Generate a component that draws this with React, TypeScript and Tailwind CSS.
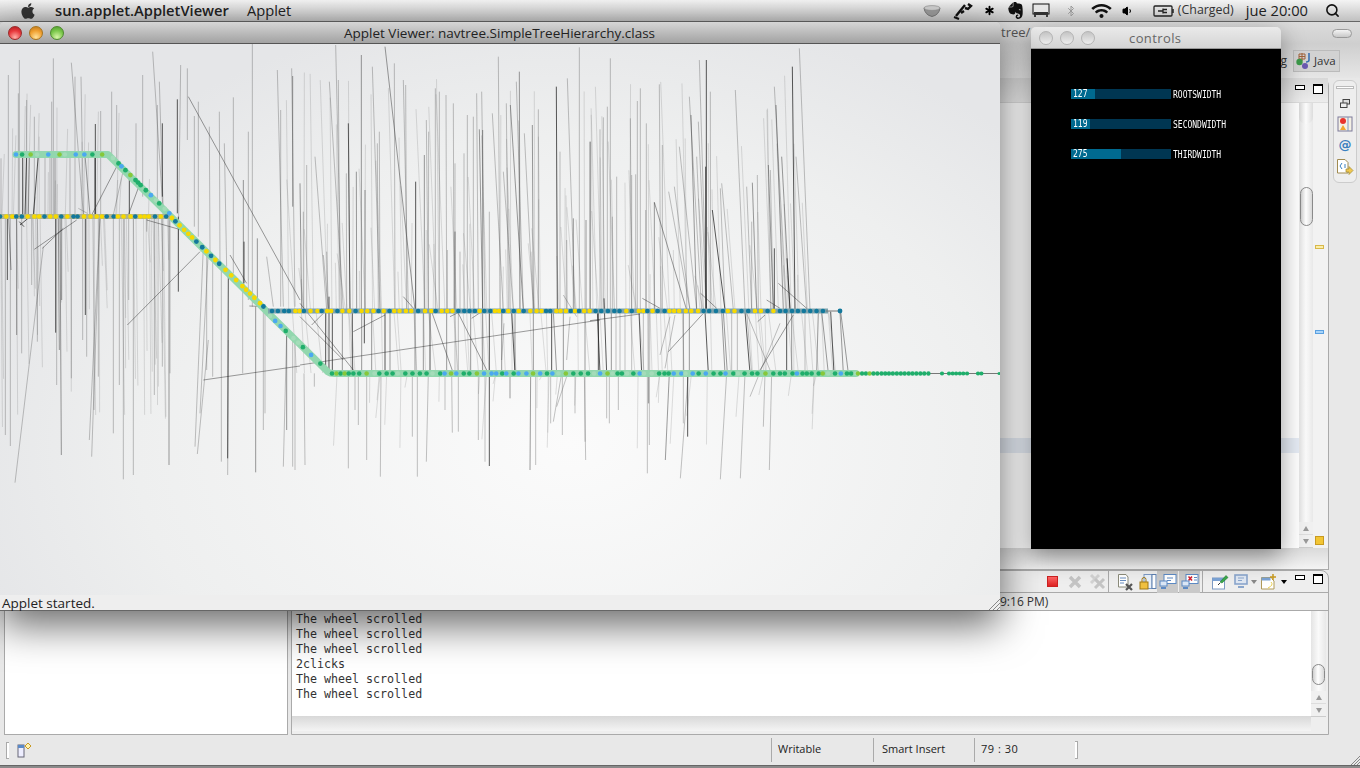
import { FaApple, FaWifi } from "react-icons/fa";
import { SiEvernote } from "react-icons/si";
import { Bluetooth, Search, Asterisk, Volume1 } from "lucide-react";

type Seg = [number, number, number, number, number];

const Z9: Seg[] = [
  [107,15,125,810,1],[88,125,130,810,1],[115,120,120,810,1],[184,45,184,810,2],[217,80,240,810,1],[145,250,150,810,3],[255,20,345,810,2],[283,70,285,810,1],[310,120,325,810,1],[317,135,320,810,1],[232,310,235,810,1],[238,275,240,810,1],[139,400,140,810,1],[169,395,170,810,2],[195,450,195,810,2],[347,425,347,810,3],[373,345,373,810,2],[379,240,385,810,1],[386,275,385,810,1],[406,145,406,810,1],[418,155,418,810,1],[438,165,440,810,1],[460,190,462,810,1],[502,225,502,810,1],[520,230,520,810,1],[492,340,492,810,1],[530,160,535,810,1],[545,155,555,810,1],[538,268,548,810,2],[548,270,548,810,2],[465,370,465,810,1],[465,575,465,810,2],[480,635,480,810,1],[442,630,442,810,1],[577,220,610,810,1],[595,50,600,810,1],[619,190,625,810,1],[631,195,670,810,2],[649,125,670,810,1],[658,95,660,810,2],[673,280,700,810,1],[697,255,700,810,2],[715,208,715,810,1],[769,140,772,810,3],[780,335,780,810,1],[802,115,825,810,1],[838,22,838,810,1],[871,305,871,810,1],[858,540,858,810,2],[820,535,820,810,2],[800,600,800,810,1],[610,395,640,810,1],[568,515,568,810,1],[20,375,20,810,1],[45,350,80,810,1],[0,430,5,810,2],[10,515,10,810,1],[70,645,85,810,1],[80,635,85,810,1],
  [77,815,77,1000,3],[87,770,87,1000,3],[97,815,97,1000,3],[127,815,127,1000,2],[157,815,157,1000,3],[185,815,185,1000,2],[193,815,193,910,3],[215,815,215,1000,2],[255,815,255,1000,3],[270,815,270,1000,2],[345,815,345,1000,2],[370,815,370,1000,2],[390,815,390,1000,3],[440,815,440,1000,2],[465,815,465,1000,1],[475,815,475,1000,1],[512,815,512,1000,2],[548,815,548,1000,2],[568,815,568,1000,3],[605,815,605,1000,2],[635,815,645,1000,3],[612,850,605,960,1],[645,815,645,1000,2],[700,815,700,1000,2],[755,815,755,1000,3],[760,815,770,1000,2],[790,815,790,1000,2],[810,830,800,960,1],[855,815,855,1000,2],[895,815,895,1000,3],
  [395,815,460,1000,2],[475,820,565,1000,2],[0,790,160,990,2],[0,830,130,960,2],[310,770,345,810,2],[160,875,255,825,2],[35,855,70,820,2],[0,975,900,840,2],[450,830,480,815,2],[515,835,545,815,2],[790,765,830,830,1],
  [12,1000,15,1275,1],[43,1000,43,1040,1],[145,1000,145,1285,1],[175,1000,175,1155,1],[165,1000,165,1110,1],[200,1000,200,1260,1],[243,1000,241,1310,1],[337,1000,337,1190,1],[352,1000,352,1310,1],[385,1000,379,1265,1],[435,1000,435,1110,1],[455,1000,457,1178,1],[475,1000,475,1175,1],[535,1000,535,1200,1],[555,1000,555,1265,1],[568,1000,568,1278,3],[630,1000,630,1075,2],[692,1000,690,1290,2],[707,1000,707,1275,1],[752,1000,752,1150,1],[785,1000,760,1145,1],[787,1000,787,1185,1],[825,1000,825,1120,1],[855,1000,855,1205,1],[853,1000,857,1260,1],[800,1010,770,1100,1],
];

const Z10: Seg[] = [
  [61,55,61,810,1],[52,200,52,810,1],[40,232,40,810,1],[30,268,30,810,1],[0,305,0,810,2],[121,235,125,810,1],[125,405,125,810,1],[137,403,137,810,1],[142,183,142,810,1],[151,145,151,810,1],[169,250,169,810,1],[167,510,167,810,1],[80,410,80,810,1],[67,530,67,810,1],[208,133,212,810,1],[217,315,217,810,1],[193,487,290,810,2],[193,487,193,810,2],[236,455,300,810,1],[253,440,300,810,1],[268,320,320,810,1],[298,170,335,810,1],[303,225,320,810,2],[325,245,350,810,1],[320,350,340,810,1],[328,60,350,810,1],[349,60,349,810,3],[361,155,362,810,1],[347,380,347,810,3],[367,510,405,810,3],[395,430,430,810,1],[391,445,405,810,1],[436,150,465,810,1],[470,440,485,810,1],[487,428,500,810,2],[502,405,505,810,1],[485,545,485,810,1],[535,375,550,810,2],[541,390,550,810,1],[553,140,590,810,1],[558,195,580,810,2],[575,350,600,810,2],[553,625,553,810,3],[591,655,600,810,3],[607,80,615,810,3],[628,25,660,810,1],[618,350,650,810,1],[565,730,650,805,2],[530,780,570,805,2],[157,775,210,805,2],[332,760,380,805,2],
  [22,815,30,1000,3],[42,775,50,1000,3],[64,815,64,1000,2],[78,815,78,1000,1],[90,815,90,1000,1],[105,815,105,1000,1],[125,815,125,1000,1],[147,815,155,1000,3],[175,815,175,1000,1],[179,815,179,1000,1],[160,815,160,1000,1],[280,815,280,1000,2],[298,815,298,1000,2],[345,815,355,1000,3],[395,815,405,1000,2],[400,815,412,1000,2],[425,815,425,1000,1],[442,815,442,1000,1],[465,815,480,1000,3],[470,815,485,1000,1],[590,815,590,1000,3],[605,815,605,1000,2],[645,815,645,1000,1],[685,815,680,1000,2],[695,815,715,1000,2],[722,815,732,1000,3],[752,815,775,1000,2],[750,815,760,1000,2],
  [235,935,340,820,2],[210,945,240,830,1],[510,990,610,825,2],[480,1070,570,850,1],[225,985,255,825,1],[503,845,525,825,2],[470,820,540,990,1],[0,842,150,822,2],
  [50,1000,50,1135,1],[58,1000,58,1150,1],[85,1000,85,1110,1],[172,1000,172,1300,1],[178,1000,178,1215,1],[175,1000,175,1090,1],[176,1000,176,1090,1],[238,1000,226,1260,2],[295,1000,271,1315,1],[280,1000,280,1150,1],[293,1000,293,1190,3],[410,1000,391,1318,1],[465,1000,451,1315,1],[525,1000,520,1160,1],[545,1000,538,1290,1],
];

const Z11: Seg[] = [
  [25,105,25,525,1],[58,60,58,525,1],[55,160,55,525,1],[80,180,80,525,1],[103,230,103,525,1],[160,55,160,525,1],[155,185,155,525,1],[214,68,250,525,1],[225,110,225,525,1],[243,110,250,525,1],[302,213,302,525,1],[286,252,286,525,3],[335,155,335,345,1],[350,195,350,370,1],[408,250,408,420,1],[428,105,428,470,1],[458,35,490,525,1],[478,125,490,525,1],[487,250,487,470,3],[472,195,472,490,1],[532,178,532,520,3],[542,75,535,600,1],[562,85,562,300,1],[583,228,583,560,1],[595,185,595,590,1],[3,355,3,525,1],
  [68,345,68,525,3],[80,345,75,525,3],[88,345,85,525,2],[115,345,100,525,3],[135,345,135,525,1],[150,345,150,525,1],[285,345,285,525,3],[255,345,270,525,2],[388,400,388,525,3],[165,345,165,525,2],[210,345,210,525,1],[350,380,275,525,2],[420,430,385,525,2],[370,390,340,525,1],
  [22,530,22,720,3],[26,530,33,690,2],[16,530,16,1185,1],[31,530,31,1218,1],[50,530,50,885,2],[65,530,65,940,1],[95,530,95,735,1],[112,530,112,905,1],[167,530,167,878,3],[170,530,170,1035,1],[180,530,184,1245,2],[175,530,178,930,2],[185,530,185,780,2],[214,530,214,1015,1],[256,530,256,825,3],[248,530,248,900,1],[260,530,260,950,1],[300,530,268,1200,1],[300,530,275,1250,1],[282,530,282,1110,1],[295,530,295,1010,1],[340,530,340,1180,1],[358,530,358,1035,1],[370,530,370,1318,1],[386,530,386,780,1],[400,530,400,1305,1],[463,530,463,1065,1],[487,530,487,980,1],[507,530,507,1275,2],[510,530,510,1000,1],[535,530,535,755,3],
  [130,620,45,1328,1],[103,628,230,540,2],[127,625,190,565,2],[382,855,600,635,2],[565,170,900,780,2],[690,645,740,730,2],[610,1020,900,978,2],[60,555,90,530,3],[58,545,72,560,3],[440,540,545,570,2],[235,505,262,520,1],[440,535,440,575,1],
  [628,260,630,640,1],[658,215,660,680,1],[700,172,700,700,1],[673,310,680,680,1],[730,420,730,740,2],[732,605,732,730,3],[745,275,745,780,1],[757,10,757,800,1],[772,595,772,790,2],[767,800,767,1297,2],[685,700,683,1255,3],[685,900,683,1305,1],[625,630,600,1120,1],[625,900,592,1242,1],[610,620,585,1220,1],[620,640,620,990,1],[638,650,638,1010,1],[664,670,664,1265,1],[728,740,728,1000,1],[790,800,790,1170,1],[795,800,795,1120,1],[860,880,850,1280,1],[860,880,860,1170,2],[878,900,878,1280,1],[885,900,885,1290,1],[832,90,850,800,1],[842,210,842,800,1],[875,85,885,800,1],[878,108,878,500,2],[800,650,820,800,1],[748,798,800,800,2],
];

const segs: Seg[] = [
  ...Z9.map((s) => [300 + s[0] / 3, 40 + s[1] / 3, 300 + s[2] / 3, 40 + s[3] / 3, s[4]] as Seg),
  ...Z10.map((s) => [590 + s[0] / 3, 40 + s[1] / 3, 590 + s[2] / 3, 40 + s[3] / 3, s[4]] as Seg),
  ...Z11.map((s) => [s[0] / 3, 40 + s[1] / 3, s[2] / 3, 40 + s[3] / 3, s[4]] as Seg),
];

let seed = 12345;
const rnd = () => {
  seed = (seed * 16807) % 2147483647;
  return seed / 2147483647;
};

// faint filler strands that give the plot its haze
for (let i = 0; i < 110; i++) {
  const x = 285 + rnd() * 540;
  segs.push([x, 70 + rnd() * 220, x + rnd() * 10 - 1, 311, 0]);
}
for (let i = 0; i < 60; i++) {
  const x = 285 + rnd() * 550;
  segs.push([x, 311, x + rnd() * 8, 373, 0]);
}
for (let i = 0; i < 30; i++) {
  const x = 335 + rnd() * 500;
  segs.push([x, 373, x - rnd() * 5, 380 + rnd() * 70, 0]);
}
for (let i = 0; i < 40; i++) {
  const x = rnd() * 170;
  segs.push([x, 216, x + rnd() * 4, 240 + rnd() * 190, 0]);
}
for (let i = 0; i < 22; i++) {
  const x = rnd() * 170;
  segs.push([x, 216, x + rnd() * 3, 90 + rnd() * 110, 0]);
}

const pick = (a: [string, number][]) => {
  let r = rnd();
  for (const [c, w] of a) {
    if (r < w) return c;
    r -= w;
  }
  return a[0][0];
};
type Node = { x: number; y: number; c: string; r: number };
const GREEN: [string, number][] = [["#1fae6b", 0.55], ["#4aa8f0", 0.18], ["#86c83a", 0.12], ["#a4dcb9", 0.15]];
const YB: [string, number][] = [["#f6d800", 0.55], ["#12789c", 0.45]];

function run(x0: number, y0: number, x1: number, y1: number, min: number, max: number, pal: [string, number][], r = 2.3): Node[] {
  const out: Node[] = [];
  const len = Math.hypot(x1 - x0, y1 - y0);
  let d = 0;
  while (d < len) {
    out.push({ x: x0 + ((x1 - x0) * d) / len, y: y0 + ((y1 - y0) * d) / len, c: pick(pal), r });
    d += min + rnd() * (max - min);
  }
  return out;
}

const nodes: Node[] = [
  ...run(16, 154.5, 108, 154.5, 5, 12, [["#4aa8f0", 0.2], ["#a4dcb9", 0.45], ["#86c83a", 0.15], ["#1fae6b", 0.2]]),
  ...run(113, 158, 170, 214, 3.5, 8, [["#4aa8f0", 0.35], ["#1fae6b", 0.3], ["#86c83a", 0.15], ["#a4dcb9", 0.2]], 2.4),
  ...run(0, 216.5, 168, 216.5, 4, 7, YB),
  ...run(172, 218, 266, 309, 4, 9, YB, 2.4),
  ...run(272, 311, 774, 311, 4, 7, YB),
  ...run(780, 311, 826, 311, 5, 6.5, [["#12789c", 1]]),
  { x: 840, y: 311, c: "#12789c", r: 2.4 },
  ...run(270, 316, 326, 369, 6, 14, [["#a4dcb9", 0.4], ["#4aa8f0", 0.2], ["#1fae6b", 0.3], ["#86c83a", 0.1]]),
  ...run(332, 373, 858, 373, 4, 8, GREEN),
  ...run(858, 373, 930, 373, 3.6, 4.2, [["#1fae6b", 0.85], ["#86c83a", 0.15]], 2.2),
  ...run(942, 373, 944, 373, 4, 4, [["#1fae6b", 1]], 2.1),
  ...run(949, 373, 969, 373, 3.4, 3.8, [["#1fae6b", 1]], 2.1),
  ...run(978, 373, 984, 373, 3.4, 3.6, [["#1fae6b", 1]], 2.1),
  { x: 999, y: 373, c: "#1fae6b", r: 1.5 },
];

const shade = ["rgba(70,70,70,0.16)", "rgba(60,60,60,0.3)", "rgba(40,40,40,0.45)", "rgba(20,20,20,0.7)"];

function Chart() {
  return (
    <svg viewBox="0 44 1000 551" className="block h-[551px] w-[1000px] blur-[0.35px]">
      {segs.map((s, i) => (
        <line key={i} x1={s[0]} y1={s[1]} x2={s[2]} y2={s[3]} stroke={shade[s[4]]} strokeWidth={1} />
      ))}
      <path d="M16 154.5H108L328 372Q330 373.5 334 373.5H856" stroke="#92d7ae" strokeWidth={7} fill="none" strokeLinecap="round" strokeLinejoin="round" />
      <path d="M0 216.5H170" stroke="#b0b48c" strokeWidth={5} fill="none" />
      <path d="M268 311H828" stroke="#7da3ad" strokeWidth={5} fill="none" />
      <path d="M826 311H840M856 373.5H1000" stroke="#777" strokeWidth={1} fill="none" />
      {nodes.map((n, i) => (
        <circle key={i} cx={n.x} cy={n.y === 373 ? 373.5 : n.y} r={n.r} fill={n.c} />
      ))}
    </svg>
  );
}

const UI = "font-['Open_Sans','Noto_Sans',sans-serif]";

function Lights() {
  return (
    <div className="flex items-center gap-[7px]">
      <div className="h-[14px] w-[14px] rounded-full border border-[#9a2a2a] bg-[radial-gradient(circle_at_50%_85%,#ffb0a8,#e8383c_55%,#a81c20)]" />
      <div className="h-[14px] w-[14px] rounded-full border border-[#a8741e] bg-[radial-gradient(circle_at_50%_85%,#ffe29a,#f0a030_55%,#b8741a)]" />
      <div className="h-[14px] w-[14px] rounded-full border border-[#4e8a2e] bg-[radial-gradient(circle_at_50%_85%,#d8f5a8,#7cc84c_55%,#4c9a2c)]" />
    </div>
  );
}

function Bar({ value, fill, label }: { value: number; fill: number; label: string }) {
  return (
    <div className="flex h-[10px] items-center">
      <div className="relative h-[10px] w-[100px] bg-[#003652]">
        <div className="h-full bg-[#006a90]" style={{ width: fill }} />
        <span className="absolute left-[2px] top-0 scale-y-125 font-['DejaVu_Sans_Mono',monospace] text-[8px] leading-[10px] text-white">{value}</span>
      </div>
      <span className="ml-[2px] mt-[1px] scale-y-125 font-['DejaVu_Sans_Mono',monospace] text-[8px] leading-[10px] text-white">{label}</span>
    </div>
  );
}

function MinMax() {
  return (
    <div className="flex items-start gap-[8px]">
      <div className="mt-[1px] h-[5px] w-[10px] border border-black bg-white" />
      <div className="h-[10px] w-[10px] border border-black border-t-[2px] bg-white" />
    </div>
  );
}

function Arrows() {
  return (
    <div className="flex flex-col items-center bg-[#f0f0f0]">
      <div className="flex h-[13px] w-full items-center justify-center border-b border-[#ddd]">
        <div className="h-0 w-0 border-x-[3px] border-b-[5px] border-x-transparent border-b-[#999]" />
      </div>
      <div className="flex h-[13px] w-full items-center justify-center border-b border-[#ccc]">
        <div className="h-0 w-0 border-x-[3px] border-t-[5px] border-x-transparent border-t-[#999]" />
      </div>
    </div>
  );
}

function Thumb({ className }: { className: string }) {
  return <div className={"mx-auto w-[13px] rounded-[7px] border border-[#8a8a8a] bg-[linear-gradient(90deg,#cfcfcf,#ffffff_45%,#d8d8d8)] " + className} />;
}

function Doc({ children }: { children?: React.ReactNode }) {
  return <svg width="18" height="18" viewBox="0 0 18 18">{children}</svg>;
}

function ConsoleIcons() {
  return (
    <div className="flex h-full items-center">
      <div className="h-[11px] w-[11px] border border-[#c22] bg-[linear-gradient(#f66,#d22)]" />
      <svg width="14" height="14" viewBox="0 0 14 14" className="ml-[10px]"><path d="M2 2L12 12M12 2L2 12" stroke="#c4c4c4" strokeWidth={3.4} /></svg>
      <svg width="17" height="17" viewBox="0 0 17 17" className="ml-[7px]"><path d="M2 2L10 10M10 2L2 10" stroke="#d2d2d2" strokeWidth={3} /><path d="M6 6L15 15M15 6L6 15" stroke="#c4c4c4" strokeWidth={3} /></svg>
      <div className="ml-[2px] h-[22px] w-px bg-[#aaa]" />
      <div className="ml-[7px]"><Doc><path d="M2.5 1.5H10L12 4V14H2.5Z" fill="#fff" stroke="#8b8b7a" /><path d="M4 5H10M4 7.5H10M4 10H8" stroke="#6a8fc0" /><path d="M10 11L16 17M16 11L10 17" stroke="#555" strokeWidth={2.2} /></Doc></div>
      <div className="ml-[5px]"><Doc><rect x="5" y="1.5" width="8" height="14" fill="#e8f0fa" stroke="#7d9ac4" /><rect x="13" y="1.5" width="4" height="14" fill="#fff" stroke="#5d80b0" /><rect x="1" y="9" width="8" height="7" fill="#f0c040" stroke="#a07814" /><path d="M3 9V6.5a2 2 0 0 1 4 0V9" fill="none" stroke="#a07814" /></Doc></div>
      <div className="flex h-[22px] w-[21px] items-center justify-center bg-[#c9c9c9]"><Doc><rect x="5" y="1.5" width="12" height="9" fill="#fff" stroke="#5d8ac4" /><path d="M8 5H14M8 7.5H12" stroke="#5d8ac4" /><rect x="1" y="8" width="7" height="5" fill="#dbe7f6" stroke="#5d8ac4" /><path d="M2 15H7" stroke="#5d8ac4" strokeWidth={2} /></Doc></div>
      <div className="ml-px flex h-[22px] w-[21px] items-center justify-center bg-[#c9c9c9]"><Doc><rect x="5" y="1.5" width="12" height="9" fill="#fff" stroke="#5d8ac4" /><path d="M7.5 3.5L11 7.5M11 3.5L7.5 7.5" stroke="#d02030" strokeWidth={1.5} /><path d="M13 4.5H16M13 7H16" stroke="#5d8ac4" /><rect x="1" y="8" width="7" height="5" fill="#dbe7f6" stroke="#5d8ac4" /><path d="M2 15H7" stroke="#5d8ac4" strokeWidth={2} /></Doc></div>
      <div className="ml-[2px] h-[22px] w-px bg-[#aaa]" />
      <div className="ml-[8px]"><Doc><rect x="1.5" y="5" width="12" height="11" fill="#fff" stroke="#7d9ac4" /><rect x="1.5" y="5" width="12" height="3" fill="#7aa2d4" /><path d="M9 9L15 2.5L17 4.5L11 10Z" fill="#3aa84a" stroke="#1e7a30" strokeWidth={0.6} /><path d="M9 10L7 12" stroke="#333" /></Doc></div>
      <div className="ml-[4px]"><Doc><rect x="2" y="2" width="12" height="9" fill="#dfe7f2" stroke="#8aa6cc" strokeWidth={1.6} /><path d="M5 5H11M5 7.5H9" stroke="#8aa6cc" /><path d="M5 14H11" stroke="#8aa6cc" strokeWidth={2} /></Doc></div>
      <div className="h-0 w-0 border-x-[3px] border-t-[4px] border-x-transparent border-t-[#888]" />
      <div className="ml-[3px]"><Doc><path d="M1.5 4.5H12V6L14 8V16H1.5Z" fill="#fff" stroke="#b09a5a" /><rect x="1.5" y="4.5" width="9" height="3" fill="#7aa2d4" /><path d="M13 1V7M10 4H16" stroke="#c89a20" strokeWidth={1.5} /><path d="M11 9Q14 12 8 15" stroke="#e8d050" fill="none" /></Doc></div>
      <div className="ml-[3px] h-0 w-0 border-x-[3px] border-t-[4px] border-x-transparent border-t-black" />
    </div>
  );
}

function TrimIcons() {
  return (
    <div className="flex flex-col items-center pt-[5px]">
      <div className="h-[3px] w-[18px] border border-[#bbb] bg-white" />
      <svg width="12" height="12" viewBox="0 0 12 12" className="mt-[9px]"><rect x="4" y="1.5" width="6.5" height="4.5" fill="#ddd" stroke="#444" /><rect x="1.5" y="5" width="6.5" height="4.5" fill="#eee" stroke="#444" /></svg>
      <svg width="16" height="16" viewBox="0 0 16 16" className="mt-[6px]"><rect x="1" y="1" width="14" height="14" fill="#f4f0e4" stroke="#7d7a9a" /><circle cx="6" cy="5" r="3" fill="#e8342c" /><path d="M3 14L6 9L9 14Z" fill="#f0a830" /><path d="M11 1V15" stroke="#7d9ac4" /></svg>
      <span className="mt-[5px] text-[13px] font-['DejaVu_Sans',sans-serif] font-bold leading-[16px] text-[#3a80c0]">@</span>
      <svg width="18" height="18" viewBox="0 0 18 18" className="mt-[5px]"><path d="M1.5 1.5H9L12 4.5V15H1.5Z" fill="#fff" stroke="#a08a50" /><path d="M6 5L4 8L6 11M8 7H10M8 9H10" stroke="#3a80c0" fill="none" /><path d="M10 11H13V8.5L17 12.5L13 16.5V14H10Z" fill="#f0c850" stroke="#a08a30" strokeWidth={0.7} /></svg>
    </div>
  );
}

export default function App() {
  return (
    <div className={"relative flex h-[768px] w-[1360px] flex-col overflow-hidden bg-[#e8e8e8] " + UI}>
      {/* Menu bar */}
      <div className="flex h-[22px] shrink-0 items-center border-b border-[#666] bg-[linear-gradient(#f4f4f4,#c0c0c0)] text-[14.7px] text-[#222]">
        <FaApple className="ml-[19px] h-[18px] w-[18px] text-[#333]" />
        <span className="ml-[18px] font-semibold">sun.applet.AppletViewer</span>
        <span className="ml-[18px]">Applet</span>
        <div className="ml-auto flex items-center">
          <svg width="18" height="12" viewBox="0 0 18 12"><path d="M1 3H17Q16 10 9 11.5Q2 10 1 3Z" fill="#9a9a9a" stroke="#777" /><ellipse cx="9" cy="3" rx="8" ry="2.4" fill="#cfcfcf" stroke="#888" strokeWidth={0.6} /></svg>
          <svg width="20" height="18" viewBox="0 0 20 18" className="ml-[12px]"><path d="M12 3L7 9L3 14M15 2L18 4L15 7L12 6M8 11L11 9" fill="none" stroke="#111" strokeWidth={2.4} /><path d="M1 15L6 17" stroke="#111" strokeWidth={2} /></svg>
          <Asterisk className="ml-[9px] h-[15px] w-[15px] text-black" strokeWidth={3} />
          <SiEvernote className="ml-[10px] h-[17px] w-[17px] text-[#111]" />
          <svg width="18" height="15" viewBox="0 0 18 15" className="ml-[8px]"><rect x="1" y="1" width="16" height="10" fill="#e6e6e6" stroke="#111" /><path d="M3 11H15V14M3 11V14" fill="none" stroke="#111" strokeWidth={1.5} /><rect x="2" y="9" width="14" height="3" fill="#333" /></svg>
          <Bluetooth className="ml-[15px] h-[12px] w-[12px] text-[#999]" />
          <FaWifi className="ml-[14px] h-[16px] w-[21px] text-[#111]" />
          <Volume1 className="ml-[10px] h-[12px] w-[12px] fill-black text-black" />
          <svg width="22" height="12" viewBox="0 0 22 12" className="ml-[19px]"><rect x="1" y="1" width="18" height="10" rx="1" fill="none" stroke="#222" strokeWidth={1.3} /><path d="M20 4V8" stroke="#222" strokeWidth={1.5} /><path d="M5 6H10M10 3.5V8.5M10 4.5H14M10 7.5H14" stroke="#222" strokeWidth={1.3} /></svg>
          <span className="ml-[3px] text-[12.4px] text-[#333]">(Charged)</span>
          <span className="ml-[12px]">jue 20:00</span>
          <Search className="ml-[17px] mr-[20px] h-[15px] w-[15px] text-[#111]" strokeWidth={2.5} />
        </div>
      </div>

      {/* Eclipse window */}
      <div className="flex h-[22px] shrink-0 items-center bg-[linear-gradient(#dcdcdc,#cfcfcf)] pl-[1001px] text-[13px] text-[#555]">
        <span>tree/</span>
        <div className="ml-auto mr-[8px] h-[9px] w-[20px] rounded-full border border-[#999] bg-[linear-gradient(#f4f4f4,#c8c8c8)]" />
      </div>
      <div className="flex h-[34px] shrink-0 items-start justify-end bg-[linear-gradient(#cfcfcf,#e6e6e6)] pr-[20px] pt-[6px] text-[11.5px] text-[#333]">
        <span className="mr-[6px] mt-[2px] text-[12px]">Debug</span>
        <div className="flex h-[22px] w-[47px] items-center gap-px border border-[#bbb] bg-[#d2d2d2] pl-px">
          <svg width="18" height="18" viewBox="0 0 18 18"><path d="M4 2H10V7H4ZM7 1V9M4 4.5H10" stroke="#a0623a" fill="none" /><circle cx="4.5" cy="10" r="3.2" fill="#3c9a4a" /><circle cx="10" cy="14" r="3" fill="#6a5ab0" /><path d="M14 1V8Q14 10 11 10" stroke="#3a70b0" strokeWidth={1.6} fill="none" /></svg>
          <span>Java</span>
        </div>
      </div>

      {/* Editor row */}
      <div className="flex h-[492px] shrink-0">
        <div className="flex w-[1329px] flex-col rounded-tr-[8px] border-r border-b border-[#aaa] bg-[#eee]">
          <div className="flex h-[25px] shrink-0 justify-end border-b border-[#ddd] bg-[linear-gradient(#d8d8d8,#ececec)] pr-[5px] pt-[6px]"><MinMax /></div>
          <div className="flex h-[445px] shrink-0">
            <div className="flex-1 flex-col bg-white pt-[335px]">
              <div className="h-[15px] bg-[#e6ecf5]" />
            </div>
            <div className="flex w-[14px] flex-col bg-[linear-gradient(90deg,#e4e4e4,#fafafa_50%,#e8e8e8)]">
              <div className="h-[21px] rounded-b-[7px] bg-[linear-gradient(90deg,#d8d8d8,#fdfdfd_50%,#dcdcdc)]" />
              <Thumb className="mt-[63px] h-[39px]" />
              <div className="flex-1" />
              <Arrows />
            </div>
            <div className="flex w-[15px] flex-col bg-[#f2f2f2] pl-[2px]">
              <div className="mt-[142px] h-[4px] w-[9px] border border-[#d8b84a] bg-[#fbeea8]" />
              <div className="mt-[81px] h-[4px] w-[9px] border border-[#5aa0e0] bg-[#a8d4fa]" />
              <div className="mt-[202px] h-[9px] w-[9px] border border-[#c89a20] bg-[#f2c534]" />
            </div>
          </div>
          <div className="flex-1 bg-[linear-gradient(#dadada,#f4f4f4)]" />
        </div>
        <div className="ml-[4px] mt-[2px] h-[103px] w-[24px] rounded-[6px] border border-[#ccc] bg-[#eee]"><TrimIcons /></div>
      </div>

      {/* Bottom row */}
      <div className="flex h-[165px] shrink-0">
        <div className="ml-[4px] w-[284px] border border-[#aaa] border-t-0 bg-white" />
        <div className="ml-[3px] flex w-[1038px] flex-col rounded-tr-[8px] border border-[#aaa] bg-[#eee]">
          <div className="flex h-[22px] shrink-0 items-center justify-end border-b border-[#aaa] pr-[5px]">
            <ConsoleIcons />
            <div className="mb-[6px] ml-[8px]"><MinMax /></div>
          </div>
          <div className="h-[18px] shrink-0 border-b border-[#aaa] pl-[708px] text-[12px] leading-[17px] text-[#333]">9:16 PM)</div>
          <div className="flex min-h-0 flex-1">
            <div className="flex-1">
              <div className="h-[105px] bg-white pl-[4px] pt-px font-['DejaVu_Sans_Mono',monospace] text-[11.65px] leading-[15px] text-[#333]">
                <div>The wheel scrolled</div>
                <div>The wheel scrolled</div>
                <div>The wheel scrolled</div>
                <div>2clicks</div>
                <div>The wheel scrolled</div>
                <div>The wheel scrolled</div>
              </div>
              <div className="h-[15px] bg-[linear-gradient(#d8d8d8,#f4f4f4)]" />
            </div>
            <div className="mr-[2px] flex w-[15px] flex-col bg-[linear-gradient(90deg,#e4e4e4,#fafafa_50%,#e8e8e8)]">
              <Thumb className="mt-[53px] h-[21px]" />
              <div className="flex-1" />
              <Arrows />
              <div className="h-[17px] bg-[#eee]" />
            </div>
          </div>
        </div>
      </div>

      {/* Status bar */}
      <div className="relative flex h-[30px] shrink-0 items-center text-[11px] text-[#222]">
        <div className="ml-[6px] h-[17px] w-[3px] border border-r-0 border-[#aaa] bg-white" />
        <svg width="16" height="16" viewBox="0 0 16 16" className="ml-[8px]"><rect x="1" y="3" width="6" height="12" fill="#eef" stroke="#667" /><rect x="1" y="3" width="6" height="3" fill="#5a8ac8" /><path d="M11 1L14 4L11 7L8 4Z" fill="#fff3b0" stroke="#c89a20" /></svg>
        <div className="ml-[738px] h-[24px] w-px bg-[#aaa]" />
        <span className="ml-[6px] w-[95px] pb-[2px]">Writable</span>
        <div className="h-[24px] w-px bg-[#aaa]" />
        <span className="ml-[8px] w-[92px] pb-[2px]">Smart Insert</span>
        <div className="h-[24px] w-px bg-[#aaa]" />
        <span className="ml-[6px] w-[94px] pb-[2px] tracking-[0.5px]">79 : 30</span>
        <div className="h-[18px] w-[3px] border border-l-0 border-[#aaa] bg-white" />
        <svg width="9" height="9" viewBox="0 0 9 9" className="absolute bottom-0 right-0"><path d="M0 9L9 0M3 9L9 3M6 9L9 6" stroke="#888" /></svg>
      </div>
      <div className="flex-1 border-t border-[#666] bg-[#8a8a8a]" />

      {/* Controls window */}
      <div className="absolute left-[1031px] top-[27px] flex h-[522px] w-[250px] flex-col rounded-t-[5px] shadow-[0_8px_24px_rgba(0,0,0,0.4)]">
        <div className="relative flex h-[22px] shrink-0 items-center rounded-t-[5px] border-b border-[#999] bg-[linear-gradient(#eaeaea,#d4d4d4)] pl-[8px]">
          <div className="flex gap-[7px]">
            <div className="h-[14px] w-[14px] rounded-full border border-[#b4b4b4] bg-[linear-gradient(#c4c4c4,#eee)]" />
            <div className="h-[14px] w-[14px] rounded-full border border-[#b4b4b4] bg-[linear-gradient(#c4c4c4,#eee)]" />
            <div className="h-[14px] w-[14px] rounded-full border border-[#b4b4b4] bg-[linear-gradient(#c4c4c4,#eee)]" />
          </div>
          <span className="ml-[34px] mt-[2px] text-[13px] tracking-[0.4px] text-[#666]">controls</span>
        </div>
        <div className="flex flex-1 flex-col gap-[20px] bg-black pl-[40px] pt-[40px]">
          <Bar value={127} fill={24} label="ROOTSWIDTH" />
          <Bar value={119} fill={19} label="SECONDWIDTH" />
          <Bar value={275} fill={50} label="THIRDWIDTH" />
        </div>
      </div>

      {/* Applet window */}
      <div className="absolute left-0 top-[22px] flex h-[589px] w-[1000px] flex-col rounded-t-[5px] shadow-[0_14px_40px_rgba(0,0,0,0.6)]">
        <div className="relative flex h-[22px] shrink-0 items-center rounded-t-[5px] border-b border-[#555] bg-[linear-gradient(#d6d6d6,#a2a2a2)] pl-[8px]">
          <Lights />
          <span className="absolute left-[344px] top-[2px] text-[13.5px] leading-[18px] text-[#222]">Applet Viewer: navtree.SimpleTreeHierarchy.class</span>
        </div>
        <div className="h-[551px] shrink-0 overflow-hidden bg-[radial-gradient(ellipse_620px_440px_at_570px_400px,#fbfbfb,#eeefef_70%,#e5e6e8)]">
          <Chart />
        </div>
        <div className="relative h-[16px] flex-1 border-b border-[#666] bg-[#eeeeee] pl-[2px] text-[13.5px] leading-[17px] text-[#222]">
          Applet started.
          <svg width="11" height="11" viewBox="0 0 11 11" className="absolute bottom-0 right-0"><path d="M0 11L11 0M4 11L11 4M8 11L11 8" stroke="#888" /></svg>
        </div>
      </div>
    </div>
  );
}
